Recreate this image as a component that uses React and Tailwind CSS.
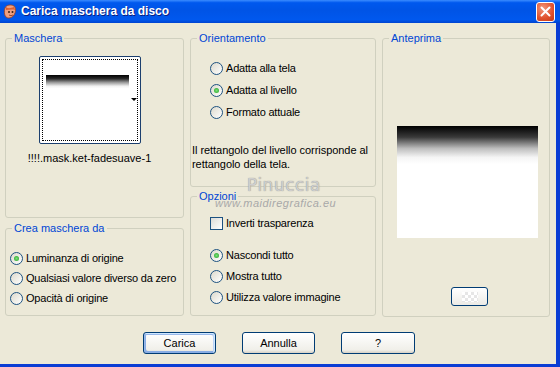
import React from 'react';

const Radio = ({ checked, label }) => (
    <div className="flex items-center h-full">
        <span className="w-[13px] h-[13px] rounded-full border border-[#1d5281] bg-[linear-gradient(135deg,#dcd9cc,#ffffff)] flex items-center justify-center shrink-0">
            {checked && <span className="w-[5px] h-[5px] rounded-full bg-[radial-gradient(circle,#7be07a,#21a121)]" />}
        </span>
        <span className="ml-[3px] whitespace-nowrap tracking-[-0.2px]">{label}</span>
    </div>
);

const Group = ({ label, className, children }) => (
    <fieldset className={`border border-[#d0d0bf] rounded-[3px] ${className}`}>
        <legend className="ml-[6px] px-[2px] text-[#0046d5] leading-[13px]">{label}</legend>
        {children}
    </fieldset>
);

const XpButton = ({ children, def, className }) => (
    <button
        type="button"
        className={`h-[22px] border border-[#003c74] rounded-[3px] bg-[linear-gradient(180deg,#ffffff,#f0efe9_85%,#d6d0c5)] text-black leading-[13px] ${def ? 'shadow-[inset_-1px_1px_#cee7ff,inset_1px_2px_#98b8ea,inset_-2px_2px_#bcd4f6,inset_1px_-1px_#89ade4,inset_2px_-2px_#89ade4]' : ''} ${className}`}
    >
        {children}
    </button>
);

const App = () => {
    return (
        <div className="w-[560px] h-[367px] flex flex-col bg-[#0a3dd4] font-['Liberation_Sans',Arial,sans-serif] text-[11px] leading-[13px] text-black overflow-hidden">
            {/* title bar */}
            <div className="h-[23px] shrink-0 flex items-center bg-[linear-gradient(180deg,#3b8cff_0%,#0058ee_12%,#0054e6_45%,#0058ee_85%,#0044d0_100%)]">
                <svg width="16" height="16" viewBox="0 0 16 16" className="ml-[2px]">
                    <path d="M3 4 C4 1 9 0 12 2 C14 4 14 8 12 11 C10 14 6 15 4 13 C2 11 2 7 3 4 Z" fill="#f0a080" stroke="#a04020" strokeWidth="0.8" />
                    <path d="M4 3 C6 5 9 4 12 3 L13 6 C10 5 7 6 4 6 Z" fill="#e06030" />
                    <circle cx="7" cy="8" r="1" fill="#402010" />
                    <circle cx="10.5" cy="8" r="1" fill="#402010" />
                    <path d="M7 11 Q9 12.5 11 11" stroke="#803020" strokeWidth="0.8" fill="none" />
                </svg>
                <span className="ml-[3px] text-white font-bold text-[12px] [text-shadow:1px_1px_#0a1f80]">Carica maschera da disco</span>
                <div className="ml-auto mr-[5px] w-[19px] h-[20px] rounded-[3px] border border-white bg-[radial-gradient(circle_at_35%_30%,#f0957a,#e0512d_60%,#c13a17)] flex items-center justify-center">
                    <svg width="11" height="11" viewBox="0 0 11 11">
                        <path d="M1.5 1.5 L9.5 9.5 M9.5 1.5 L1.5 9.5" stroke="white" strokeWidth="2" strokeLinecap="round" />
                    </svg>
                </div>
            </div>

            {/* client area */}
            <div className="relative flex-1 mr-[4px] mb-[3px] bg-[#ece9d8] pt-[9px] pl-[5px]">
                <div className="flex">
                    {/* left column */}
                    <div className="w-[179px] flex flex-col">
                        <Group label="Maschera" className="h-[186px]">
                            <div className="w-[167px] flex flex-col items-center pt-[11px]">
                                <div className="relative w-[102px] h-[88px] border border-[#1c3f6e] rounded-[2px] bg-white p-[2px]">
                                    <div className="w-full h-full border border-dotted border-black pt-[15px] pl-[3px]">
                                        <div className="w-[83px] h-[62px] bg-[linear-gradient(180deg,#000000_0%,#2a2a2a_6%,#9a9a9a_12%,#f2f2f2_18%,#ffffff_22%)]" />
                                    </div>
                                    <div className="absolute right-[3px] top-[41px] w-0 h-0 border-l-[3px] border-r-[3px] border-t-[3px] border-l-transparent border-r-transparent border-t-black" />
                                </div>
                                <div className="mt-[8px]">!!!!.mask.ket-fadesuave-1</div>
                            </div>
                        </Group>
                        <Group label="Crea maschera da" className="mt-[4px] h-[94px]">
                            <div className="pl-[4px] pt-[13px] flex flex-col">
                                <div className="h-[20px]"><Radio checked label="Luminanza di origine" /></div>
                                <div className="h-[20px]"><Radio label="Qualsiasi valore diverso da zero" /></div>
                                <div className="h-[20px]"><Radio label="Opacità di origine" /></div>
                            </div>
                        </Group>
                    </div>

                    {/* middle column */}
                    <div className="ml-[6px] w-[186px] flex flex-col">
                        <Group label="Orientamento" className="h-[155px]">
                            <div className="pl-[19px] pt-[12px] flex flex-col">
                                <div className="h-[22px]"><Radio label="Adatta alla tela" /></div>
                                <div className="h-[22px]"><Radio checked label="Adatta al livello" /></div>
                                <div className="h-[22px]"><Radio label="Formato attuale" /></div>
                            </div>
                            <p className="mt-[20px] pl-[1px] leading-[14px] tracking-[-0.05px]">
                                Il rettangolo del livello corrisponde al rettangolo della tela.
                            </p>
                        </Group>
                        <Group label="Opzioni" className="mt-[3px] h-[126px]">
                            <div className="pl-[19px] pt-[10px] flex flex-col">
                                <div className="h-[20px] flex items-center">
                                    <span className="w-[13px] h-[13px] border border-[#1d5281] bg-[linear-gradient(135deg,#dcdcd7,#ffffff)]" />
                                    <span className="ml-[3px] tracking-[-0.2px]">Inverti trasparenza</span>
                                </div>
                                <div className="mt-[12px] h-[21px]"><Radio checked label="Nascondi tutto" /></div>
                                <div className="h-[21px]"><Radio label="Mostra tutto" /></div>
                                <div className="h-[21px]"><Radio label="Utilizza valore immagine" /></div>
                            </div>
                        </Group>
                    </div>

                    {/* right column */}
                    <div className="ml-[6px] w-[168px]">
                        <Group label="Anteprima" className="h-[285px]">
                            <div className="pl-[14px] pt-[81px]">
                                <div className="w-[141px] h-[112px] bg-[linear-gradient(180deg,#000000_0%,#3a3a3a_10%,#bdbdbd_20%,#f5f5f5_28%,#ffffff_34%)]" />
                            </div>
                            <div className="ml-[68px] mt-[49px] w-[37px] h-[19px] border border-[#003c74] rounded-[3px] bg-[linear-gradient(180deg,#ffffff,#ecebe6)] flex items-center justify-center">
                                <div className="w-[16px] h-[10px] bg-[repeating-conic-gradient(#e6e6e6_0%_25%,#ffffff_0%_50%)] bg-[length:6px_6px]" />
                            </div>
                        </Group>
                    </div>
                </div>

                {/* buttons */}
                <div className="flex mt-[15px]">
                    <XpButton def className="ml-[138px] w-[73px]">Carica</XpButton>
                    <XpButton className="ml-[26px] w-[73px]">Annulla</XpButton>
                    <XpButton className="ml-[26px] w-[74px]">?</XpButton>
                </div>

                {/* watermark */}
                <div className="absolute left-[247px] top-[152px] text-[17px] leading-[20px] tracking-[0.5px] text-[#cfcfcf] font-['DejaVu_Sans',sans-serif] [text-shadow:0_0_1px_#7f7f7f] pointer-events-none">
                    Pinuccia
                </div>
                <div className="absolute left-[215px] top-[174px] text-[11px] leading-[13px] italic text-[#a8a8a8] tracking-[0.5px] pointer-events-none">
                    www.maidiregrafica.eu
                </div>
            </div>
        </div>
    );
};

export default App;
